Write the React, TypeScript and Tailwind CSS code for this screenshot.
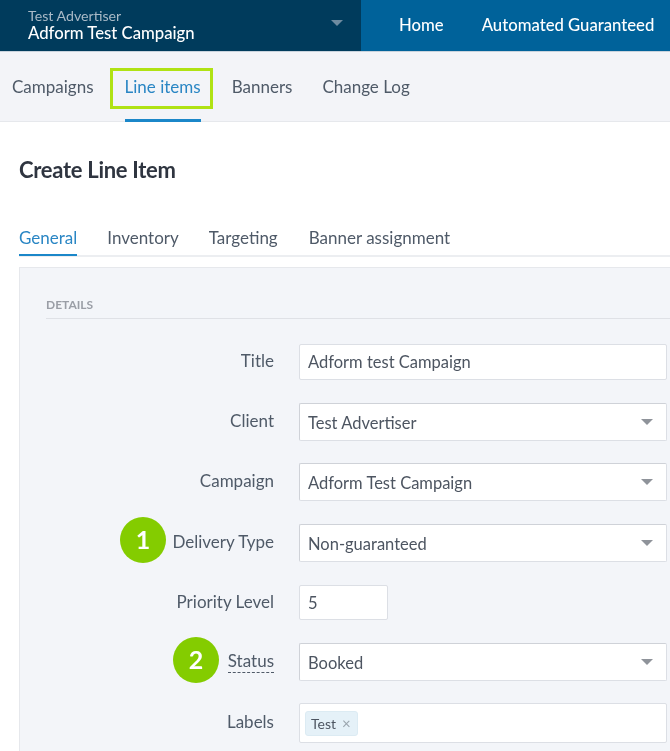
import type { ReactNode } from "react";

const font = { fontFamily: '"Lato", "Open Sans", sans-serif' };

function Caret({ className }: { className: string }) {
  return (
    <svg width="12" height="6" viewBox="0 0 12 6" className={className}>
      <path d="M0 0h12L6 6z" fill="currentColor" />
    </svg>
  );
}

function Badge({ n, className }: { n: number; className: string }) {
  return (
    <div
      className={`absolute flex h-[46px] w-[46px] items-center justify-center rounded-full bg-[#84cc00] text-[25px] font-bold text-white ${className}`}
    >
      {n}
    </div>
  );
}

function Row({
  label,
  mt,
  children,
  labelClass = "",
}: {
  label: string;
  mt: string;
  children: ReactNode;
  labelClass?: string;
}) {
  return (
    <div className={`flex items-center ${mt}`}>
      <div className="w-[254px] shrink-0 -translate-y-[1px] text-right text-[17px] leading-5 text-[#4f5a68]">
        <span className={labelClass}>{label}</span>
      </div>
      <div className="ml-[25px] min-w-0 flex-1">{children}</div>
    </div>
  );
}

function Input({ value, className = "w-[368px] h-[36px]" }: { value: string; className?: string }) {
  return (
    <div className={`flex items-center rounded-[2px] border border-[#dcdfe5] bg-white pl-2 pt-[1px] text-[16.5px] text-[#4d5561] ${className}`}>
      {value}
    </div>
  );
}

function Select({ value }: { value: string }) {
  return (
    <div className="flex h-[38px] w-[368px] items-center justify-between rounded-[2px] border border-[#dcdfe5] border-l-[#cfd2d8] border-t-[#cfd2d8] bg-white pl-2 pr-[13px] text-[16.5px] text-[#4d5561]">
      <span className="translate-y-[0.5px]">{value}</span>
      <Caret className="text-[#8f939a]" />
    </div>
  );
}

export default function App() {
  return (
    <div className="relative h-[751px] w-[670px] overflow-hidden bg-white blur-[0.4px]" style={font}>
      {/* top bar */}
      <header className="flex h-[52px] border-b border-[#c9d3dd]">
        <div className="flex w-[361px] items-center justify-between bg-[#003b5c] pl-[28px] pr-[18px]">
          <div>
            <div className="text-[14.2px] leading-[15px] text-[#a9bac7]">Test Advertiser</div>
            <div className="text-[16.7px] font-medium leading-[20px] text-white">Adform Test Campaign</div>
          </div>
          <Caret className="-translate-y-[3px] text-[#6f8ba0]" />
        </div>
        <nav className="flex flex-1 items-center overflow-hidden whitespace-nowrap bg-[#00629a] pl-[38px] text-[16.7px] font-medium text-white">
          <span>Home</span>
          <span className="ml-[38px]">Automated Guaranteed</span>
        </nav>
      </header>

      {/* section nav */}
      <nav className="flex h-[70px] items-center border-b border-[#e6e8ec] bg-[#f3f4f8] pl-3 pt-[1px] text-[17px] text-[#4f5a68]">
        <span>Campaigns</span>
        <span className="relative ml-[31px] flex h-[68px] items-center text-[#2a86c4]">
          Line items
          <span className="absolute bottom-[-1px] left-0 right-0 h-[3px] bg-[#1b87c9]" />
          <span className="absolute -left-[15px] -right-[12px] top-[15px] h-[41px] border-[3px] border-[#b0e214]" />
        </span>
        <span className="ml-[31px]">Banners</span>
        <span className="ml-[30px]">Change Log</span>
      </nav>

      {/* page */}
      <main className="pl-[19px]">
        <h1 className="mt-[33px] text-[22px] font-bold leading-[30px] tracking-[-0.3px] text-[#2f3540]">Create Line Item</h1>
        <div className="mt-[34px] flex h-[38px] border-b-2 border-[#eceef1] text-[17px] text-[#4f5a68]">
          <span className="h-[37px] border-b-2 border-[#1b87c9] pt-[6px] text-[#2a86c4]">General</span>
          <span className="ml-[30px] pt-[6px]">Inventory</span>
          <span className="ml-[30px] pt-[6px]">Targeting</span>
          <span className="ml-[31px] pt-[6px]">Banner assignment</span>
        </div>

        <section className="mt-[10px] h-[500px] border-l border-t border-[#e6e8ec] bg-[#f3f5f9] pl-[26px] pt-[30px]">
          <div className="border-b border-[#dfe1e6] pb-[6px] text-[12px] font-bold leading-[14px] text-[#9a9ea6]">DETAILS</div>

          <div className="-ml-[26px]">
            <Row label="Title" mt="mt-[25px]">
              <Input value="Adform test Campaign" />
            </Row>
            <Row label="Client" mt="mt-[23px]">
              <Select value="Test Advertiser" />
            </Row>
            <Row label="Campaign" mt="mt-[22px]">
              <Select value="Adform Test Campaign" />
            </Row>
            <Row label="Delivery Type" mt="mt-[23px]">
              <Select value="Non-guaranteed" />
            </Row>
            <Row label="Priority Level" mt="mt-[23px]">
              <Input value="5" className="h-[35px] w-[89px]" />
            </Row>
            <Row label="Status" mt="mt-[23px]" labelClass="border-b border-dashed border-[#4f5a68] pb-[1px]">
              <Select value="Booked" />
            </Row>
            <Row label="Labels" mt="mt-[22px]">
              <div className="flex h-[40px] w-[368px] items-center rounded-[2px] border border-[#dcdfe5] bg-white pl-[5px]">
                <span className="flex h-[25px] items-center rounded-[3px] border border-[#dcebf3] bg-[#e5f1f8] px-[5px] text-[14px] text-[#4d5561]">
                  Test
                  <span className="ml-[6px] mr-[1px] text-[15px] leading-none text-[#9aa5ad]">×</span>
                </span>
              </div>
            </Row>
          </div>
        </section>
      </main>

      <Badge n={1} className="left-[120px] top-[517px]" />
      <Badge n={2} className="left-[173px] top-[637px]" />
    </div>
  );
}
